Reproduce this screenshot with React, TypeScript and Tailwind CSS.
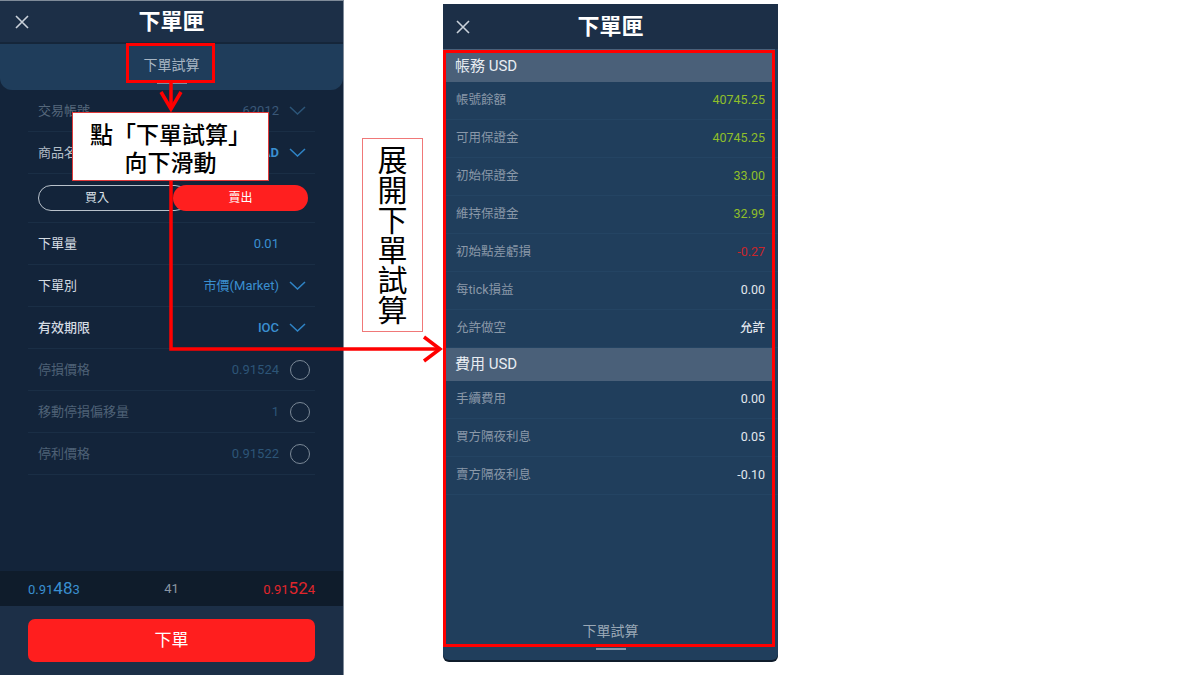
import React from 'react';

const font = "font-[Roboto,'Noto_Sans_CJK_TC',sans-serif]";

const Chevron = ({ dim }: { dim?: boolean }) => (
  <svg width="17" height="9" viewBox="0 0 17 9" className="ml-[2px]">
    <polyline points="1,1 8.5,8 16,1" fill="none" stroke={dim ? '#2c5578' : '#2f84c6'} strokeWidth="1.5" />
  </svg>
);

const Circle = () => <div className="ml-[3px] w-[20px] h-[20px] rounded-full border-[1.5px] border-[#7b8997]" />;

type Row = {
  label: string;
  value: string;
  labelCls: string;
  valueCls: string;
  tail?: 'chevron' | 'chevron-dim' | 'circle';
};

const leftRows: Row[] = [
  { label: '交易帳號', value: '62012', labelCls: 'text-[#56687c]', valueCls: 'text-[#3a5878]', tail: 'chevron-dim' },
  { label: '商品名稱', value: 'AUDCAD', labelCls: 'text-[#b4bec8]', valueCls: 'text-[#3a8fd0] font-bold', tail: 'chevron' },
];

const leftRows2: Row[] = [
  { label: '下單量', value: '0.01', labelCls: 'text-[#d4dbe2]', valueCls: 'text-[#3a8fd0]' },
  { label: '下單別', value: '市價(Market)', labelCls: 'text-[#d4dbe2]', valueCls: 'text-[#3a8fd0]', tail: 'chevron' },
  { label: '有效期限', value: 'IOC', labelCls: 'text-[#d4dbe2] font-medium', valueCls: 'text-[#3a8fd0] font-medium', tail: 'chevron' },
  { label: '停損價格', value: '0.91524', labelCls: 'text-[#4e6176]', valueCls: 'text-[#2d5577]', tail: 'circle' },
  { label: '移動停損偏移量', value: '1', labelCls: 'text-[#4e6176]', valueCls: 'text-[#2d5577]', tail: 'circle' },
  { label: '停利價格', value: '0.91522', labelCls: 'text-[#4e6176]', valueCls: 'text-[#2d5577]', tail: 'circle' },
];

const FormRow = ({ row }: { row: Row }) => (
  <div className="h-[42px] flex items-center border-b border-[#1a2e45] pl-[10px] pr-[2px] text-[13px]">
    <span className={`flex-1 ${row.labelCls}`}>{row.label}</span>
    <span className={row.valueCls}>{row.value}</span>
    <div className="w-[26px] ml-[8px] flex items-center">
      {row.tail === 'chevron' && <Chevron />}
      {row.tail === 'chevron-dim' && <Chevron dim />}
      {row.tail === 'circle' && <Circle />}
    </div>
  </div>
);

const CloseX = () => (
  <svg width="14" height="14" viewBox="0 0 14 14">
    <path d="M1 1 L13 13 M13 1 L1 13" stroke="#c9d1da" strokeWidth="1.6" />
  </svg>
);

const accountRows = [
  { label: '帳號餘額', value: '40745.25', cls: 'text-[#8fbf2a]' },
  { label: '可用保證金', value: '40745.25', cls: 'text-[#8fbf2a]' },
  { label: '初始保證金', value: '33.00', cls: 'text-[#8fbf2a]' },
  { label: '維持保證金', value: '32.99', cls: 'text-[#8fbf2a]' },
  { label: '初始點差虧損', value: '-0.27', cls: 'text-[#c8262c]' },
  { label: '每tick損益', value: '0.00', cls: 'text-[#e2e8ee]' },
  { label: '允許做空', value: '允許', cls: 'text-[#e2e8ee] font-medium' },
];

const feeRows = [
  { label: '手續費用', value: '0.00' },
  { label: '買方隔夜利息', value: '0.05' },
  { label: '賣方隔夜利息', value: '-0.10' },
];

export default function App() {
  return (
    <div className={`relative w-[1200px] h-[675px] bg-white flex ${font}`}>
      {/* left phone */}
      <div className="w-[344px] shrink-0 h-[675px] flex flex-col border-t border-r border-[#7f8b99] bg-[#13243a]">
        <div className="h-[43px] grid grid-cols-[44px_1fr_44px] items-center bg-[#1c2f47] border-b-2 border-[#15263a]">
          <div className="flex justify-center"><CloseX /></div>
          <div className="text-center text-white text-[22px] font-bold">下單匣</div>
          <div />
        </div>
        <div className="h-[46px] bg-[#1f3d5b] rounded-b-[12px] flex flex-col items-center justify-center pt-[4px]">
          <span className="text-[14px] text-[#a7b5c3]">下單試算</span>
          <div className="w-[30px] h-[2px] bg-[#7d8fa2] mt-[6px]" />
        </div>
        <div className="flex-1 px-[28px]">
          {leftRows.map((r) => <FormRow key={r.label} row={r} />)}
          <div className="h-[49px] flex items-center pl-[10px] border-b border-[#1a2e45]">
            <div className="w-[150px] h-[26px] rounded-full border-[1.5px] border-[#b9c2cb] flex items-center pl-[46px] text-[12px] text-[#dfe5eb]">
              買入
            </div>
            <div className="relative -ml-[15px] w-[135px] h-[26px] rounded-full bg-[#ff1f1f] flex items-center justify-center text-[12px] text-white">
              賣出
            </div>
          </div>
          {leftRows2.map((r) => <FormRow key={r.label} row={r} />)}
        </div>
        <div className="h-[35px] bg-[#0f1c2b] flex items-center justify-between px-[28px]">
          <span className="text-[#3a8fd0] text-[13px]">0.91<span className="text-[17px]">48</span>3</span>
          <span className="text-[#8b97a3] text-[13px]">41</span>
          <span className="text-[#e0262c] text-[13px]">0.91<span className="text-[17px]">52</span>4</span>
        </div>
        <div className="h-[69px] bg-[#1c2f47] px-[28px] flex items-center">
          <div className="w-full h-[43px] rounded-[7px] bg-[#ff1e1e] flex items-center justify-center text-white text-[17px]">
            下單
          </div>
        </div>
      </div>

      {/* vertical annotation */}
      <div className="w-[99px] shrink-0 pt-[138px]">
        <div className="ml-[18px] w-[61px] h-[194px] border border-[#f07878] bg-white flex items-center justify-center">
          <span className="[writing-mode:vertical-rl] text-[30px] leading-[30px] text-black font-['Noto_Sans_CJK_TC',sans-serif]">
            展開下單試算
          </span>
        </div>
      </div>

      {/* right phone */}
      <div className="relative shrink-0 mt-[4px] w-[335px] h-[656px] flex flex-col bg-[#203e5c] rounded-b-[6px] shadow-[0_2px_0_#0f1c2b]">
        <div className="h-[45px] grid grid-cols-[40px_1fr_40px] items-center bg-[#1c2f47]">
          <div className="flex justify-center"><CloseX /></div>
          <div className="text-center text-white text-[22px] font-bold">下單匣</div>
          <div />
        </div>
        <div className="h-[33px] mr-[3px] bg-[#4a6079] flex items-center pt-[2px] px-[12px] text-[15px] text-[#e8edf2]">帳務 USD</div>
        {accountRows.map((r) => (
          <div key={r.label} className="h-[38px] flex items-center justify-between px-[13px] border-b border-[#244463] text-[12.5px]">
            <span className="text-[#8a98a8]">{r.label}</span>
            <span className={r.cls}>{r.value}</span>
          </div>
        ))}
        <div className="h-[33px] mr-[3px] bg-[#4a6079] flex items-center px-[12px] text-[15px] text-[#e8edf2]">費用 USD</div>
        {feeRows.map((r) => (
          <div key={r.label} className="h-[38px] flex items-center justify-between px-[13px] border-b border-[#244463] text-[12.5px]">
            <span className="text-[#8a98a8]">{r.label}</span>
            <span className="text-[#e2e8ee]">{r.value}</span>
          </div>
        ))}
        <div className="flex-1 flex flex-col items-center justify-end pb-[10px]">
          <span className="text-[14px] text-[#9aa8b6]">下單試算</span>
          <div className="w-[30px] h-[2px] bg-[#8797a8] mt-[6px]" />
        </div>
        <div className="absolute left-0 top-[46px] w-[332px] h-[597px] border-[3px] border-[#ff0000]" />
      </div>

      {/* arrows */}
      <svg className="absolute inset-0 pointer-events-none" width="1200" height="675">
        <g stroke="#ff0000" strokeWidth="3.5" fill="none">
          <path d="M171 82 L171 108" />
          <path d="M161 92 L171 109 L181 92" />
          <path d="M171 180 L171 349 L439 349" />
          <path d="M424 337 L440 349 L424 361" />
        </g>
      </svg>

      {/* highlight on tab */}
      <div className="absolute left-[126px] top-[43px] w-[89px] h-[40px] border-[3px] border-[#ff0000]" />

      {/* note box */}
      <div className="absolute left-[72px] top-[112px] w-[197px] h-[69px] bg-white border border-[#e03a3a] flex flex-col items-center justify-center text-[23px] leading-[28px] text-black font-medium font-['Noto_Sans_CJK_TC',sans-serif]">
        <span>點「下單試算」</span>
        <span>向下滑動</span>
      </div>
    </div>
  );
}
